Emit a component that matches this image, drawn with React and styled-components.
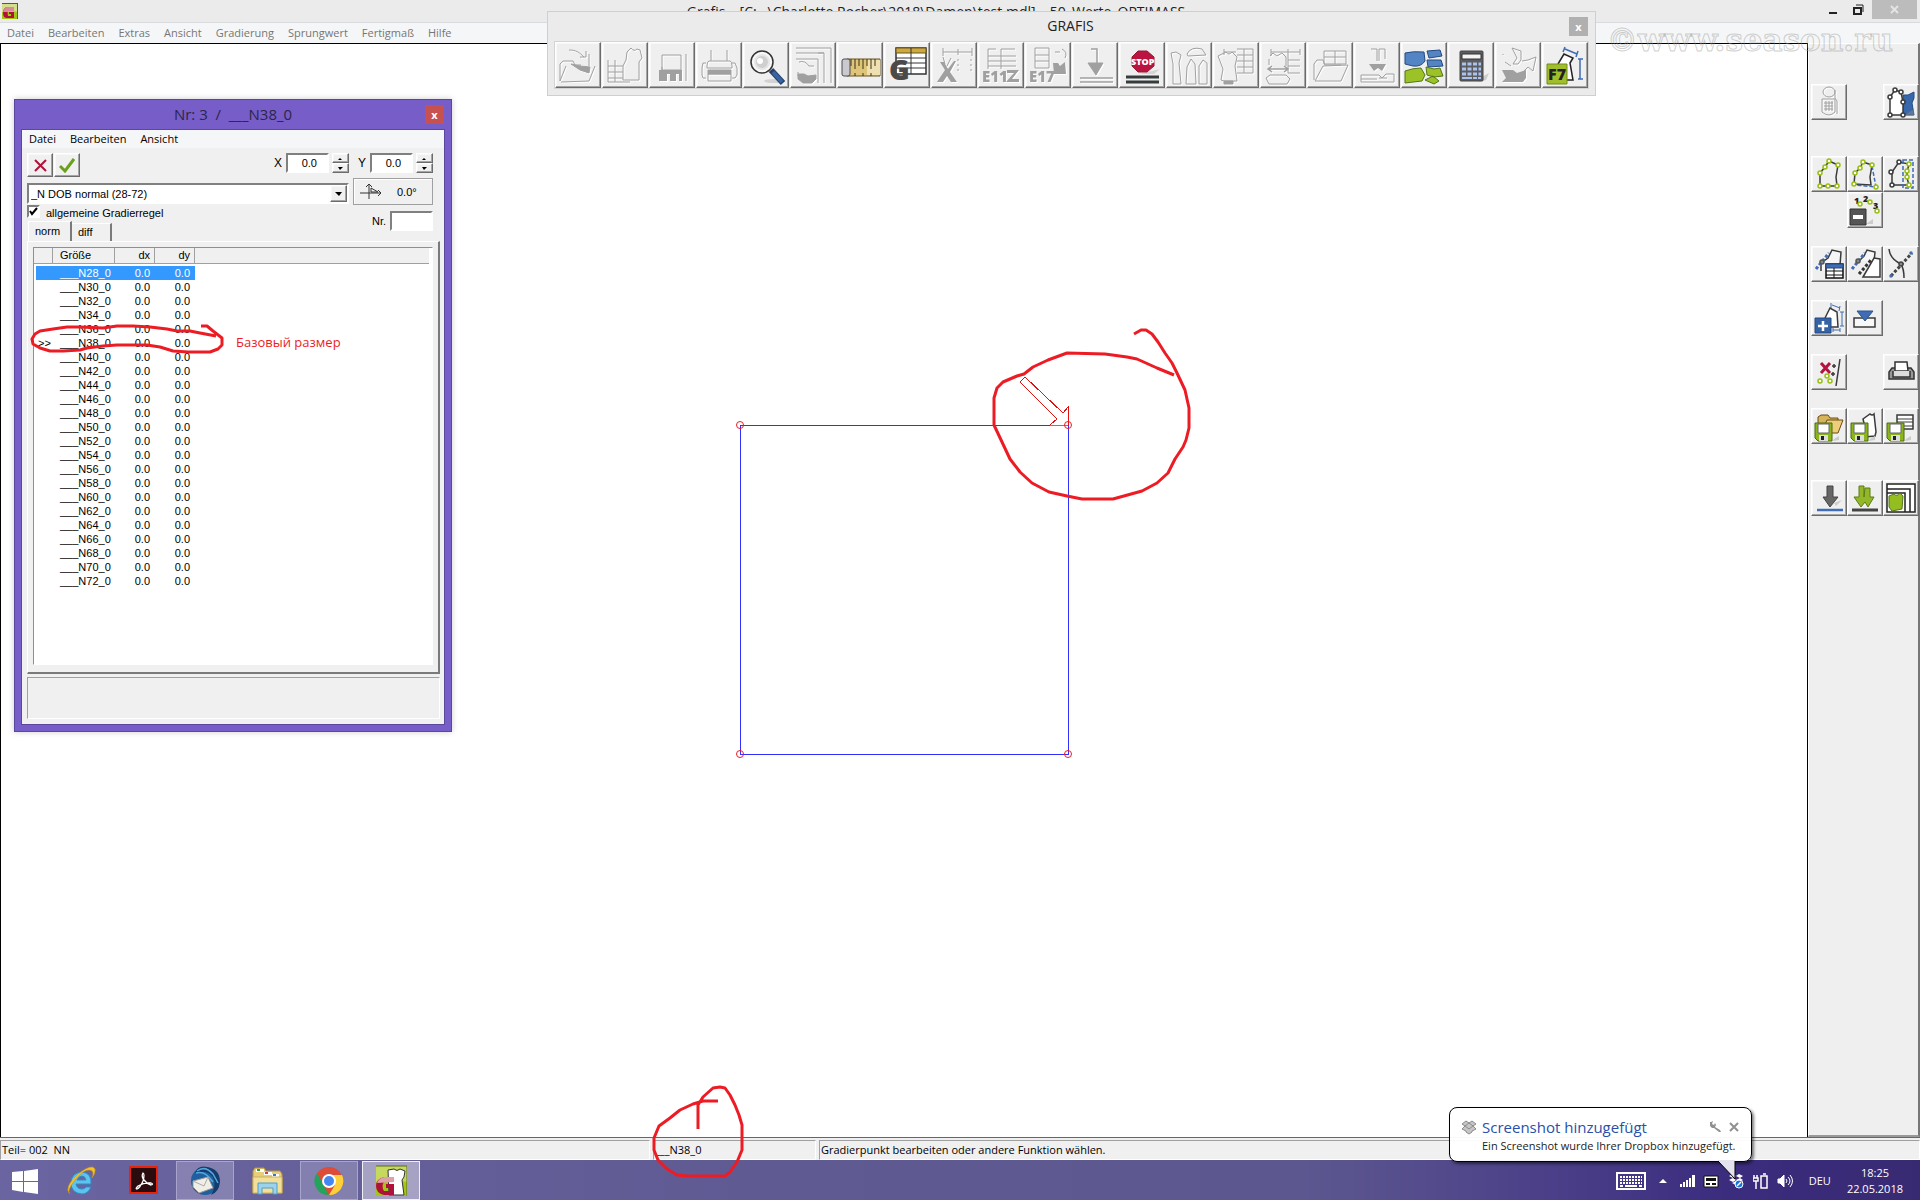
import React, { useState } from "react";
import styled, { createGlobalStyle } from "styled-components";

const GlobalStyle = createGlobalStyle`
* {
    box-sizing: border-box;
}

body {
    margin: 0;
    overflow: hidden;
    font-family: 'Open Sans', 'Noto Sans', sans-serif;
    font-size: 11px;
    color: #000;
}

button, input, select {
    font: inherit;
    color: inherit;
    margin: 0;
    padding: 0;
    border-radius: 0;
}
`;

/* ---------- desktop and main window ---------- */

const Desktop = styled.div`
position: relative;
display: flex;
flex-direction: column;
height: 100vh;
background-color: #f0f0f0;
overflow: hidden;
`;

const TitleBar = styled.header`
display: flex;
align-items: flex-start;
height: 23px;
padding-left: 2px;
background-color: #ebebeb;
border-bottom: 1px solid #d8dade;
`;

const AppIcon = styled.svg`
width: 16px;
height: 16px;
margin-top: 3px;
`;

const WindowTitle = styled.h1`
flex: 1;
margin: 0;
padding-left: 34px;
font-size: 14px;
line-height: 24px;
font-weight: 400;
text-align: center;
color: #222;
white-space: pre;
`;

const WindowControls = styled.div`
display: flex;
margin-right: 3px;
`;

const WindowButton = styled.button`
width: ${props => (props.$wide ? 45 : 26)}px;
height: 19px;
border: 0;
background-color: ${props => (props.$wide ? "#bcbcbc" : "transparent")};

svg {
    display: block;
    margin: 0 auto;
}
`;

const MenuBar = styled.nav`
display: flex;
gap: 14px;
height: ${props => props.$height}px;
padding-left: 7px;
background-color: #f5f6f7;
color: ${props => props.$color};
line-height: ${props => props.$height}px;
`;

const MenuLink = styled.a`
color: inherit;
text-decoration: none;
`;

const Workspace = styled.main`
flex: 1;
display: flex;
min-height: 0;
border-bottom: 1px solid #666;
`;

const Canvas = styled.section`
position: relative;
flex: 1;
background-color: #fff;
border: 1px solid #000;
border-bottom: 0;
`;

const Drawing = styled.svg`
position: absolute;
left: 0;
top: 0;
width: 100%;
height: 100%;
`;

const SideBar = styled.aside`
width: 112px;
padding: 40px 1px 0 2px;
background-color: #efefef;
border: 1px solid #fff;
border-right: 2px solid #777;
border-bottom: 2px solid #999;
`;

const SideRow = styled.div`
display: grid;
grid-template-columns: repeat(3, 36px);
height: 36px;
margin-bottom: ${props => props.$gap}px;
`;

const bevel = `
border: 1px solid;
border-color: #fff #6b6b6b #6b6b6b #fff;
box-shadow: inset -1px -1px 0 #a5a5a5, inset 1px 1px 0 #f8f8f8;
`;

const ToolButton = styled.button`
${bevel}
width: ${props => props.$size}px;
height: ${props => props.$size}px;
background-color: #efefef;

svg {
    display: block;
    margin: -1px;
    ${props => props.$dim && "filter: drop-shadow(1px 1px 0 #fff);"}
}
`;

/* ---------- floating palette ---------- */

const Palette = styled.section`
position: absolute;
left: 547px;
top: 11px;
padding: 0 6px 6px;
background-color: #ebebeb;
border: 1px solid #cfcfcf;
`;

const PaletteHead = styled.div`
display: flex;
align-items: center;
height: 29px;

h2 {
    flex: 1;
    margin: 0;
    padding: 0 0 2px 18px;
    font-size: 14px;
    line-height: 24px;
    font-weight: 400;
    text-align: center;
    color: #222;
}
`;

const CloseButton = styled.button`
width: 19px;
height: 19px;
margin-right: 1px;
border: 0;
background-color: ${props => props.$color};
color: #fff;
font-size: 11px;
font-weight: 700;
line-height: 16px;
`;

const PaletteTools = styled.div`
display: flex;
gap: 1px;
border: 1px solid #d4d4d4;
`;

/* ---------- grading dialog ---------- */

const Dialog = styled.section`
position: absolute;
left: 14px;
top: 99px;
width: 438px;
padding: 0 6px 6px;
background-color: #765dc8;
border: 1px solid #5a489f;
box-shadow: 0 0 6px rgba(0, 0, 0, .2);
`;

const DialogHead = styled.div`
display: flex;
align-items: center;
height: 29px;

h2 {
    flex: 1;
    margin: 0;
    padding: 0 0 2px 20px;
    font-size: 15px;
    font-weight: 400;
    text-align: center;
    color: #2d2548;
    white-space: pre;
}
`;

const DialogBody = styled.div`
border: 1px solid #5a489f;
background-color: #f0f0f0;
font-family: 'Liberation Sans', sans-serif;

nav {
    font-family: 'Open Sans', sans-serif;
}
`;

const DialogContent = styled.div`
display: flex;
flex-direction: column;
padding: 5px 4px 5px 5px;
`;

const FormRow = styled.div`
display: flex;
align-items: flex-start;
height: ${props => props.$height}px;
padding-right: 7px;
`;

const NumberGroup = styled.div`
display: flex;
padding-top: 6px;
`;

const SquareButton = styled.button`
${bevel}
width: 26px;
height: 24px;
margin-right: 1px;
background-color: #f0f0f0;

svg {
    display: block;
    margin: 0 auto;
}
`;

const Spacer = styled.span`
flex: 1;
`;

const FieldLabel = styled.label`
margin-right: 4px;
font-size: ${props => (props.$big ? 12 : 11)}px;
line-height: ${props => (props.$low ? 16 : 20)}px;
`;

const sunken = `
border: 2px solid;
border-color: #808080 #fff #fff #808080;
background-color: #fff;
`;

const NumberField = styled.input`
${sunken}
width: 43px;
height: 20px;
padding-right: ${props => (props.$tight ? 2 : 10)}px;
text-align: right;
`;

const Spinner = styled.span`
display: flex;
flex-direction: column;
margin: 0 0 0 3px;
padding-right: ${props => props.$after}px;

button {
    ${bevel}
    display: block;
    width: 17px;
    height: 10px;
    background-color: #f0f0f0;
}

svg {
    display: block;
    margin: 0 auto;
}
`;

const SelectBox = styled.div`
display: grid;
flex: 1;
margin-top: 5px;
margin-right: 4px;

select {
    ${sunken}
    grid-area: 1 / 1;
    height: 21px;
    padding-left: 2px;
    appearance: none;
}

span {
    ${bevel}
    grid-area: 1 / 1;
    justify-self: end;
    width: 17px;
    height: 17px;
    margin: 2px;
    background-color: #f0f0f0;
    pointer-events: none;
}
`;

const AngleButton = styled.button`
display: flex;
align-items: center;
gap: 14px;
width: 80px;
height: 27px;
padding-left: 6px;
border: 1px solid #a0a0a0;
background-color: #f0f0f0;
box-shadow: inset 1px 1px 0 #fff;
`;

const CheckBox = styled.input`
${sunken}
appearance: none;
width: 13px;
height: 13px;
margin: 0 6px 0 0;

&:checked {
    background: #fff url("data:image/svg+xml,%3Csvg xmlns='http://www.w3.org/2000/svg' viewBox='0 0 9 9'%3E%3Cpath d='M1 4l2 3 5-6' fill='none' stroke='%23000' stroke-width='2'/%3E%3C/svg%3E");
}
`;

const TabRow = styled.div`
display: flex;
align-items: flex-end;
height: 20px;
padding-left: 1px;
`;

const Tab = styled.button`
width: ${props => (props.$active ? 44 : 40)}px;
height: ${props => (props.$active ? 20 : 18)}px;
padding: 0 0 2px 6px;
border: 0;
border-top: 1px solid #fff;
border-left: ${props => (props.$active ? "1px solid #fff" : 0)};
border-right: 2px solid #7a7a7a;
background-color: #f0f0f0;
text-align: left;
line-height: 16px;
`;

const TabPanel = styled.div`
height: 433px;
padding: 5px 5px 7px;
border: 1px solid #fff;
border-right: 2px solid #7a7a7a;
border-bottom: 2px solid #7a7a7a;
`;

const ListBox = styled.div`
height: 100%;
border: 1px solid #8f8f8f;
border-right-color: #fff;
border-bottom-color: #fff;
background-color: #fff;
`;

const SizeTable = styled.table`
width: calc(100% - 3px);
table-layout: fixed;
border-collapse: separate;
border-spacing: 0;

th {
    height: 16px;
    padding: 0 4px 0 7px;
    border-right: 1px solid #a0a0a0;
    border-bottom: 1px solid #a0a0a0;
    background-color: #f0f0f0;
    font-weight: 400;
    line-height: 15px;
    text-align: right;
}

th:nth-child(2) {
    text-align: left;
}

th:last-child {
    border-right: 0;
}

tbody::before {
    content: "";
    display: block;
    height: 2px;
}

td {
    height: 14px;
    padding: 0 5px 0 7px;
    line-height: 14px;
    text-align: right;
}

td:first-child {
    padding: 0 0 0 2px;
    border-left: 2px solid transparent;
    background-clip: padding-box;
    text-align: left;
}

td:nth-child(2) {
    text-align: left;
}
`;

const SizeRow = styled.tr`
td:not(:last-child) {
    background-color: ${props => (props.$selected ? "#3399ff" : "transparent")};
    color: ${props => (props.$selected ? "#fff" : "#000")};
}
`;

const MessagePanel = styled.div`
height: 42px;
margin-top: 3px;
border: 1px solid #a0a0a0;
border-right-color: #fff;
border-bottom-color: #fff;
`;

/* ---------- status bar and task bar ---------- */

const StatusBar = styled.footer`
display: flex;
gap: 3px;
height: 22px;
padding-top: 2px;
background-color: #f0f0f0;
`;

const StatusCell = styled.div`
flex: ${props => (props.$width ? `0 0 ${props.$width}px` : 1)};
padding-left: 1px;
border: 1px solid #a0a0a0;
border-right-color: #fff;
border-bottom-color: #fff;
line-height: 18px;
white-space: pre;
`;

const TaskBar = styled.footer`
display: flex;
height: 40px;
padding-top: 1px;
background: linear-gradient(90deg, #6a64a0 0, #5f5a92 40%, #5c578f 68%, #4c4189 80%, #3b2c7e 90%, #382a72 100%);
color: #fff;
`;

const TaskButton = styled.button`
width: ${props => (props.$start ? 48 : 58)}px;
height: 39px;
margin-right: 4px;
border: 1px solid ${props => (props.$front ? "#f0eff6" : props.$open ? "#a8a4cc" : "transparent")};
background-color: ${props => (props.$front ? "rgba(255,255,255,.42)" : props.$open ? "rgba(255,255,255,.2)" : "transparent")};

svg {
    display: block;
    margin: 0 auto;
}
`;

const Tray = styled.div`
display: flex;
align-items: center;
margin-left: auto;
padding-right: 17px;
`;

const TrayIcon = styled.svg`
display: block;
margin-right: ${props => props.$after}px;
`;

const Clock = styled.time`
margin-left: 16px;
line-height: 16px;
text-align: center;
white-space: pre-line;
`;

const Balloon = styled.section`
position: absolute;
right: 168px;
bottom: 38px;
width: 303px;
height: 55px;
padding: 8px 10px 0 11px;
border: 1px solid #000;
border-radius: 8px;
background-color: rgba(255, 255, 255, .96);
box-shadow: 2px 2px 3px rgba(0, 0, 0, .5);

p {
    margin: 0;
    padding-left: 21px;
    line-height: 16px;
    color: #222;
    white-space: nowrap;
}
`;

const BalloonHead = styled.div`
display: flex;
align-items: center;
gap: 5px;
height: 22px;

h2 {
    flex: 1;
    margin: 0;
    font-size: 15px;
    font-weight: 400;
    line-height: 22px;
    color: #2850aa;
    white-space: nowrap;
}

button {
    width: 14px;
    height: 22px;
    border: 0;
    background: none;
}
`;

const BalloonTail = styled.svg`
position: absolute;
right: 14px;
top: 52px;
`;

const Watermark = styled.div`
position: absolute;
right: 27px;
top: 22px;
font-family: 'DejaVu Serif', serif;
font-size: 31px;
font-weight: 700;
line-height: 36px;
color: transparent;
-webkit-text-stroke: 1px rgba(150, 150, 150, .45);
pointer-events: none;
`;

const Markup = styled.svg`
position: absolute;
left: 0;
top: 0;
width: 100%;
height: 100%;
pointer-events: none;
`;

const Note = styled.div`
position: absolute;
left: 236px;
top: 333px;
font-size: 13px;
line-height: 18px;
color: #ed1c24;
`;

/* ---------- drawings ---------- */

const GREY = "#a0a0a0";
const GREEN = "#97bf0d";
const BLUE = "#3f6cb5";
const DARK = "#3a3a3a";

const Dot = ({ x, y, c = GREEN, fill = "#fff", r = 2 }) => (
    <circle cx={x} cy={y} r={r} fill={fill} stroke={c} strokeWidth="1.5" />
);

const Label = ({ x, y, size, fill, children }) => (
    <text x={x} y={y} fontSize={size} fontWeight="800" fill={fill} stroke="none">{children}</text>
);

const Floppy = () => (
    <g stroke="none">
        <path d="M4 15h17v18H7l-3-3z" fill="#8ab51c" stroke="#4c6b12" />
        <path d="M7 16h11v9H7z" fill="#fff" stroke="#666" />
        <path d="M8 27h9v6H8z" fill="#ddd" />
        <path d="M10 28h3v4h-3z" fill="#222" />
        <path d="M23 31l5-3v4l-6 1z" fill="#ccc" />
    </g>
);

const paletteTools = [
    { name: "Öffnen", dim: true, icon: <>
        <path d="M5 39V22l3-3h10l2 4h6M5 39L11 24M6 40l28-1 6-15M14 8c7 0 10 2 15 7M25 15h6v-6M34 12v12" />
        <path d="M16 22l9 2 10 1-1 6-9-3z" fill={GREY} />
    </> },
    { name: "Modell", dim: true, icon: <>
        <path d="M6 18v22h22M6 24h15M6 30h15M6 36h15M13 18v22M21 24v14h16V20l3-4-2-8-3-1q-3 3-6-1l-4 4-1 8-3 6" />
    </> },
    { name: "Speichern", dim: true, icon: <>
        <path d="M13 13h19v15H13zM37 12v27M13 28v-3" />
        <path d="M10 28h23v11h-3v-7h-3v7h-6v-7h-3v7h-8z" fill={GREY} stroke="none" />
    </> },
    { name: "Drucken", dim: true, icon: <>
        <path d="M15 8v11M31 8v11M13 19h21q2 0 2 5v2H11v-2q0-5 2-5zM10 21H7l-1 5v7l1 3h3M36 21h3l2 5v7l-2 3h-3M12 32h23v7H12z" />
        <path d="M12 28h23v4H12z" fill={GREY} />
    </> },
    { name: "Lupe", icon: <>
        <ellipse cx="31" cy="39" rx="10" ry="2" fill="#d2d2d2" stroke="none" />
        <path d="M28 28l12 13" stroke="#2d3f66" strokeWidth="6" />
        <path d="M30 30l9 10" stroke="#3465a4" strokeWidth="4" />
        <circle cx="19" cy="20" r="11" fill="#f8f8f8" stroke="#333" strokeWidth="1.5" />
        <circle cx="19" cy="20" r="7" fill="#cfcfcf" stroke="#e6e6e6" strokeWidth="2" />
        <circle cx="17" cy="19" r="3" fill="#fff" stroke="none" />
    </> },
    { name: "Rahmen", dim: true, icon: <>
        <path d="M6 6h35v35M34 41V11M6 11h28M6 17h22v24M28 11h6M9 20q6-2 10 4h5M8 30v4" />
        <path d="M8 32h6l4 2 8-1v4l-4 4h-9l-5-4z" fill={GREY} />
    </> },
    { name: "Massband", icon: <>
        <path d="M10 17h33v17H10z" fill="#dfc57a" stroke="#6b5620" />
        <path d="M30 18h13v15H30z" fill="#efe0b2" stroke="none" />
        <path d="M14 17v7M18 17v10M22 17v7M26 17v10M30 17v7M34 17v10M38 17v7M18 31v3M26 31v3M34 31v3" stroke="#3d3210" />
        <rect x="5" y="17" width="8" height="17" rx="2" fill="#c9c9cf" stroke="#4c4c4c" />
    </> },
    { name: "Masstabelle", icon: <>
        <path d="M12 6h30v26H12z" fill="#fff" stroke="#333" strokeWidth="1.5" />
        <path d="M12 6h30v5H12z" fill="#cfa93c" stroke="#6b5620" />
        <path d="M12 16h30M12 21h30M12 26h30M27 6v26" stroke="#333" />
        <Label x="5" y="38" size="28" fill="#4a4a4a">G</Label>
    </> },
    { name: "Schneiden", dim: true, icon: <>
        <path d="M12 6v8M12 10h29M41 6v8M27 7v6M27 17v2M27 22v2M27 27v2M40 17v2M40 22v2M40 27v2M20 16l-4 8M12 15l2 7" />
        <path d="M9 20h4l4 7 6-8h2l-6 11 7 10h-6l-4-6-4 6H6l8-12z" fill={GREY} stroke="none" />
    </> },
    { name: "E11", dim: true, icon: <>
        <path d="M10 7h8M23 7h14M10 14h28M10 19h28M10 24h28M10 7v20M23 7v20" />
        <Label x="4" y="40" size="15" fill={GREY}>E11</Label>
        <path d="M29 28h12l-7 9h7v3H28l8-9h-7z" fill={GREY} stroke="none" />
    </> },
    { name: "E17", dim: true, icon: <>
        <path d="M10 6h14v20H10zM10 13h14M10 19h14M30 10h5M37 7q6 3 3 9" />
        <path d="M28 21h5l2 3 5-4 1 12H29z" fill={GREY} stroke="none" />
        <Label x="4" y="40" size="15" fill={GREY}>E17</Label>
    </> },
    { name: "Ablegen", dim: true, icon: <>
        <path d="M19 7h6v14M8 36h33M8 40h33" strokeWidth="1.5" />
        <path d="M16 21h15l-7 12z" fill={GREY} />
    </> },
    { name: "Stop", icon: <>
        <path d="M33 29l8-2-6 5H20z" fill="#d4d4d4" stroke="none" />
        <path d="M19 9h9l7 6v9l-7 6h-9l-6-6v-9z" fill="#bb1440" stroke="#8f1a38" />
        <Label x="12" y="23" size="9" fill="#fff">STOP</Label>
        <path d="M7 35h33M7 40h33" stroke="#363c3c" strokeWidth="3" />
    </> },
    { name: "Teile", dim: true, icon: <>
        <path d="M5 11l5-1 5 3-2 8 2 21H7V22zM21 12q4-8 15-5l4 6-18 1zM20 42l1-17 4-8 4 5 1 20zM33 42V24l4-6 4 3v21z" />
    </> },
    { name: "Teil in Tabelle", dim: true, icon: <>
        <path d="M24 7h16v24H24M24 13h16M24 19h16M24 25h16M31 7v24M11 7v6M11 10h12M5 14l8-4q3 4 6 0l5 5-2 9 2 15H11l-3-1 2-11z" />
        <path d="M11 39h9v3h-9z" fill={GREY} />
    </> },
    { name: "Breite", dim: true, icon: <>
        <path d="M11 7v7M11 10h29M28 7v24h12M28 18h12M28 24h12M40 7v6M10 14l3-3 4 3 5-3 4 4v9M6 36l4-3h16l4 4-3 5H9zM9 17v6" />
        <path d="M8 27h20M12 24l-4 3 4 3M24 24l4 3-4 3" strokeWidth="1.5" />
    </> },
    { name: "Ablage", dim: true, icon: <>
        <path d="M17 9h22v13H17zM17 15h22M28 9v13M7 38V22l3-4h6l2 5h16M8 39l8-15 25-1-7 16z" />
    </> },
    { name: "Ablegen in Lage", dim: true, icon: <>
        <path d="M17 7h6v12M25 19V7h6v10M7 33h18l3 3 4-4h8v8H7zM7 37h16M25 36h8" />
        <path d="M15 22h17l-4 7-4-3-4 3z" fill={GREY} stroke="none" />
    </> },
    { name: "Schnittbild", icon: <>
        <path d="M4 11q8-2 19-1l1 9q-4 6-12 5l-8-2zM26 9l13-1 2 6-13 2zM26 18h14l2 6-15 1z" fill="#5384c4" stroke="#254a80" />
        <path d="M4 29q8-3 16-3l4 7-3 6-17 2zM25 25l8 2 6-1 3 8-9 1-7-2zM24 38l8-4 6 5-5 3z" fill="#9bc327" stroke="#55751a" />
    </> },
    { name: "Rechner", icon: <>
        <path d="M34 35l7-4-3 7-8 2z" fill="#ccc" stroke="none" />
        <rect x="12" y="9" width="23" height="30" rx="1" fill="#5d5d5f" stroke="#444" />
        <path d="M14 12h19v5H14z" fill="#f4f4f4" stroke="#333" />
        <path d="M14 22h19M14 27h19M14 32h19" stroke="#a9c2f0" strokeWidth="3" strokeDasharray="4 1.5" />
        <path d="M14 36h19" stroke="#a9c2f0" strokeWidth="2" strokeDasharray="10 1 4 1" />
    </> },
    { name: "Ausgabe", dim: true, icon: <>
        <path d="M17 6l9 3v9l-3 4h-5l4-6zM27 19l6-1 8-3-3 14-5-4-6 6M8 12v1M10 20l6 4" />
        <path d="M7 28h11l4 3 9-3v8l-3 4H7l4-4z" fill={GREY} stroke="none" />
    </> },
    { name: "F7", icon: <>
        <path d="M23 7l12 5M23 5l-2 5M36 9l-2 6M38 17v20M36 17h5M36 37h5" stroke={BLUE} strokeWidth="1.5" />
        <path d="M16 22l6-10 9 4-3 5 3 17h-6" fill="#fff" stroke="#222" strokeWidth="1.5" />
        <path d="M5 22h20v20H5z" fill="#a0be2c" stroke="#748d15" />
        <Label x="6" y="38" size="16" fill="#222">F7</Label>
    </> },
];

const sideRows = [
    { gap: 36, tools: [
        { name: "Telefon", dim: true, icon: <>
            <ellipse cx="18" cy="8" rx="6" ry="5" />
            <path d="M11 15h13v13q-6 6-13 0zM13 19h9M13 22h9M13 25h9M15 17v10M18 17v10M21 17v10M24 6v8l2 3v13" />
        </> },
        null,
        { name: "Teil anzeigen", icon: <>
            <path d="M20 11l5 0 6-3v6l-2 5 2 12H20z" fill="#3768ab" stroke="#244a80" />
            <path d="M31 25v7H20z" fill="#888" stroke="none" opacity=".5" />
            <path d="M7 31V13l5-7 6 2 2 10v13z" fill="#fff" stroke={DARK} strokeWidth="1.5" />
            <Dot x="7" y="13" c={DARK} /><Dot x="12" y="6" c={DARK} /><Dot x="18" y="8" c={DARK} />
            <Dot x="20" y="18" c={DARK} /><Dot x="7" y="31" c={DARK} /><Dot x="20" y="31" c={DARK} />
        </> },
    ] },
    { gap: 0, tools: [
        { name: "Alle Punkte", icon: <>
            <path d="M9 30V17l5-6 4-6 9 4-2 12 1 9z" stroke={DARK} strokeWidth="1.5" />
            <Dot x="9" y="17" /><Dot x="14" y="11" /><Dot x="18" y="5" /><Dot x="27" y="9" />
            <Dot x="9" y="30" /><Dot x="17" y="30" /><Dot x="26" y="30" />
        </> },
        { name: "Punkt verschieben", icon: <>
            <path d="M7 28l1-11 5-5 3-6 9 3-2 12 1 8z" stroke={DARK} strokeWidth="1.5" />
            <path d="M25 10l4 21-21-2" stroke={BLUE} strokeDasharray="4 2" strokeWidth="1.5" />
            <Dot x="8" y="17" /><Dot x="13" y="12" /><Dot x="16" y="6" /><Dot x="25" y="9" />
            <Dot x="7" y="28" /><Dot x="29" y="31" />
        </> },
        { name: "Punkte wählen", icon: <>
            <path d="M26 29H9V16l7-10 10 2-2 8v6z" stroke={DARK} strokeWidth="1.5" />
            <path d="M20 4h10v28H20z" stroke={BLUE} strokeDasharray="4 2" strokeWidth="1.5" />
            <Dot x="8" y="16" c={DARK} /><Dot x="16" y="6" c={DARK} /><Dot x="9" y="29" c={DARK} />
            <Dot x="26" y="8" /><Dot x="24" y="15" /><Dot x="24" y="21" /><Dot x="26" y="29" />
        </> },
    ] },
    { gap: 18, tools: [
        null,
        { name: "Nummerieren", icon: <>
            <path d="M19 32l7-5v5z" fill="#ccc" stroke="none" />
            <Label x="7" y="12" size="9" fill="#222">1</Label>
            <Label x="16" y="10" size="9" fill="#222">2</Label>
            <Label x="26" y="17" size="9" fill="#222">3</Label>
            <Dot x="13" y="12" /><Dot x="23" y="10" /><Dot x="30" y="19" />
            <path d="M3 17h16v16H3z" fill="#555" stroke="#333" />
            <path d="M6 23h10v4H6z" fill="#fff" stroke="none" />
        </> },
        null,
    ] },
    { gap: 18, tools: [
        { name: "Sprungwerttabelle", icon: <>
            <path d="M10 25v-8l7-5 4-8 9 2-1 13" fill="#f6f6f6" stroke={DARK} strokeWidth="1.5" />
            <path d="M5 23L18 7" stroke={BLUE} strokeWidth="3" strokeDasharray="3 2" />
            <Dot x="11" y="16" c="#555" fill="#888" />
            <path d="M15 18h17v14H15z" fill="#fff" stroke="#111" strokeWidth="1.5" />
            <path d="M15 18h17v4H15z" fill={BLUE} stroke="#254a80" />
            <path d="M15 25h17M15 29h17M23 22v10" stroke="#111" />
        </> },
        { name: "Sprungwert kopieren", icon: <>
            <path d="M13 14l4-4 3-6 8 2-1 10" fill="#f6f6f6" stroke={DARK} strokeWidth="1.5" />
            <path d="M16 31l11-19 6 1v18z" fill="#fff" stroke={DARK} strokeWidth="1.5" />
            <path d="M5 23L18 7" stroke={BLUE} strokeWidth="3" strokeDasharray="3 2" />
            <path d="M12 28l12-14" stroke="#333" strokeWidth="3" strokeDasharray="3 2" />
            <Dot x="11" y="15" c="#555" fill="#888" />
        </> },
        { name: "Richtung", icon: <>
            <path d="M6 3q1 10 12 15 3 5 3 14" stroke={DARK} strokeWidth="1.5" />
            <path d="M8 30L29 7" stroke="#444" strokeWidth="3" strokeDasharray="3 2" />
            <Dot x="18" y="18" c="#444" fill="#888" /><Dot x="8" y="30" c={BLUE} fill={BLUE} r="1" />
            <Dot x="28" y="7" c={BLUE} fill={BLUE} r="1" />
        </> },
    ] },
    { gap: 18, tools: [
        { name: "Hinzufügen", icon: <>
            <path d="M21 5l8 3M20 3v5M29 6l-1 5M31 12v14M29 12h4M29 26h4M22 30h7M22 28v4M29 28v4" stroke={BLUE} />
            <path d="M14 18l5-10 7 4 1 15h-8" fill="#fff" stroke={DARK} strokeWidth="1.5" />
            <path d="M4 18h16v15H4z" fill="#3563a5" stroke="#254a80" />
            <path d="M12 21v10M7 26h10" stroke="#fff" strokeWidth="2.5" />
        </> },
        { name: "Einfügen", icon: <>
            <path d="M7 18h21v9H7z" fill="#f8f8f8" stroke={DARK} strokeWidth="1.5" />
            <path d="M10 11h16l-8 10z" fill={BLUE} stroke="#2c5590" />
        </> },
        null,
    ] },
    { gap: 18, tools: [
        { name: "Löschen", icon: <>
            <path d="M10 9l9 10M19 9l-9 10" stroke="#b3123e" strokeWidth="3" />
            <path d="M29 5l-4 27" stroke={DARK} strokeWidth="1.5" />
            <path d="M21 12h4M23 10v4M20 20h4M22 18v4" stroke={DARK} strokeWidth="1.5" />
            <Dot x="16" y="22" /><Dot x="9" y="27" /><Dot x="19" y="27" />
        </> },
        null,
        { name: "Drucken", icon: <>
            <path d="M9 14h19l3 4v7H6v-7z" fill="#999" stroke="#333" strokeWidth="1.5" />
            <path d="M12 8h12l1 9H12z" fill="#fff" stroke="#333" strokeWidth="1.5" />
            <path d="M10 17v6h17v-6" fill="#ddd" stroke="#333" strokeWidth="1.5" />
        </> },
    ] },
    { gap: 36, tools: [
        { name: "Ordner speichern", icon: <>
            <path d="M7 21V9l3-2h7l2 3h8v3" fill="#d5b45a" stroke="#6b4b17" />
            <path d="M12 21l4-9h16l-5 13H12z" fill="#efce7a" stroke="#6b4b17" />
            <Floppy />
        </> },
        { name: "Teil speichern", icon: <>
            <path d="M17 29V15l-1-4 7-5q2 2 4 0l1 9 1 9-1 4z" fill="#fff" stroke={DARK} strokeWidth="1.5" />
            <Floppy />
        </> },
        { name: "Tabelle speichern", icon: <>
            <path d="M14 7h16v14H14z" fill="#fff" stroke={DARK} strokeWidth="1.5" />
            <path d="M14 11h16M14 14h16M14 18h16" stroke={DARK} />
            <Floppy />
        </> },
    ] },
    { gap: 0, tools: [
        { name: "Ablegen", icon: <>
            <path d="M23 23l8-3-6 6z" fill="#ccc" stroke="none" />
            <path d="M16 6h6v11h5l-8 10-7-10h4z" fill="#666" stroke="#444" />
            <path d="M6 30h26" stroke={BLUE} strokeWidth="2.5" />
        </> },
        { name: "Alle ablegen", icon: <>
            <path d="M12 6h5v11l1-9h5v9h4l-6 10-3-5-4 5-7-10h5z" fill="#93b827" stroke="#5c7a15" />
            <path d="M5 30h26" stroke="#444" strokeWidth="3" />
        </> },
        { name: "Teileliste", icon: <>
            <path d="M4 4h28v28H4z" fill="#fff" stroke="#222" strokeWidth="1.5" />
            <path d="M4 9h23v23M4 13h18v19" stroke="#222" strokeWidth="1.5" />
            <path d="M6 16l5-2q3 3 6-1l3 3-1 13-10 2-3-4z" fill="#94bd20" stroke="#55751a" />
        </> },
    ] },
];

const Tool = ({ tool, size }) => (
    <ToolButton type="button" $size={size} $dim={tool.dim} title={tool.name} aria-label={tool.name}>
        <svg width={size} height={size} fill="none" stroke={GREY} strokeWidth="1">{tool.icon}</svg>
    </ToolButton>
);

const GrafisMark = () => (
    <>
        <path d="M0 0h16v16H0z" fill="#a2c517" />
        <path d="M0 0h16v9q-8-2-16 0z" fill="#d4df8d" />
        <path d="M0 0h15v1H0zM15 0h1v16h-1z" fill="#565e35" />
        <path d="M12 4H5Q1 5 1 10t4 5h7V9H7v2h2v2H6q-1-3 0-5h6z" fill="#b0103a" />
        <path d="M12 4H5Q2 5 1 9h11z" fill="#e5a7b2" opacity=".8" />
    </>
);

const sizes = [];
for (let n = 28; n <= 72; n += 2) {
    sizes.push({ name: `___N${n}_0`, base: n === 38 });
}

const Steps = ({ name, after }) => (
    <Spinner $after={after}>
        <button type="button" aria-label={`${name} erhöhen`}>
            <svg width="5" height="3"><path d="M0 3l2-2 2 2z" /></svg>
        </button>
        <button type="button" aria-label={`${name} verringern`}>
            <svg width="5" height="3"><path d="M0 0h5L2 3z" /></svg>
        </button>
    </Spinner>
);

const GradingDialog = () => {
    const [selected, setSelected] = useState(0);
    const [tab, setTab] = useState("norm");
    return (
        <Dialog>
            <DialogHead>
                <h2>{"Nr: 3  /  ___N38_0"}</h2>
                <CloseButton $color="#c75050" type="button" aria-label="Schließen">x</CloseButton>
            </DialogHead>
            <DialogBody>
                <MenuBar $height={18} $color="#000">
                    {["Datei", "Bearbeiten", "Ansicht"].map(item => <MenuLink href="#" key={item}>{item}</MenuLink>)}
                </MenuBar>
                <DialogContent>
                    <FormRow $height={25}>
                        <SquareButton type="button" aria-label="Abbrechen">
                            <svg width="16" height="16" fill="none" stroke="#b0123a" strokeWidth="2"><path d="M3 3l11 11M14 3L3 14" /></svg>
                        </SquareButton>
                        <SquareButton type="button" aria-label="Übernehmen">
                            <svg width="16" height="16" fill="none" stroke="#6ba01c" strokeWidth="3"><path d="M1 9l5 5L15 2" /></svg>
                        </SquareButton>
                        <Spacer />
                        <FieldLabel htmlFor="x" $big>X</FieldLabel>
                        <NumberField id="x" defaultValue="0.0" />
                        <Steps name="X" after={9} />
                        <FieldLabel htmlFor="y" $big>Y</FieldLabel>
                        <NumberField id="y" defaultValue="0.0" />
                        <Steps name="Y" after={0} />
                    </FormRow>
                    <FormRow $height={27}>
                        <SelectBox>
                            <select aria-label="Sprungwertregel">
                                <option>_N DOB normal (28-72)</option>
                            </select>
                            <span><svg width="15" height="15"><path d="M4 6h7l-3 4z" /></svg></span>
                        </SelectBox>
                        <AngleButton type="button">
                            <svg width="23" height="18" fill="none" stroke="#333"><path d="M0 10h21M18 7l3 3-3 3M9 1v15M6 4l3-3 3 3M11 5l7 4h-7z" /></svg>
                            0.0°
                        </AngleButton>
                    </FormRow>
                    <FormRow $height={16}>
                        <CheckBox type="checkbox" id="rule" defaultChecked />
                        <FieldLabel htmlFor="rule" $low>allgemeine Gradierregel</FieldLabel>
                        <Spacer />
                        <NumberGroup>
                            <FieldLabel htmlFor="nr">Nr.</FieldLabel>
                            <NumberField id="nr" $tight />
                        </NumberGroup>
                    </FormRow>
                    <TabRow>
                        {["norm", "diff"].map(name => (
                            <Tab key={name} type="button" $active={tab === name} onClick={() => setTab(name)}>{name}</Tab>
                        ))}
                    </TabRow>
                    <TabPanel>
                        <ListBox>
                            <SizeTable>
                                <colgroup>
                                    <col width="19" />
                                    <col width="62" />
                                    <col width="40" />
                                    <col width="40" />
                                    <col />
                                </colgroup>
                                <thead>
                                    <tr><th></th><th>Größe</th><th>dx</th><th>dy</th><th></th></tr>
                                </thead>
                                <tbody>
                                    {sizes.map((size, i) => (
                                        <SizeRow key={size.name} $selected={i === selected} onClick={() => setSelected(i)}>
                                            <td>{size.base ? ">>" : ""}</td>
                                            <td>{size.name}</td>
                                            <td>0.0</td>
                                            <td>0.0</td>
                                            <td></td>
                                        </SizeRow>
                                    ))}
                                </tbody>
                            </SizeTable>
                        </ListBox>
                    </TabPanel>
                    <MessagePanel />
                </DialogContent>
            </DialogBody>
        </Dialog>
    );
};

const tasks = [
    { name: "Internet Explorer", icon: <>
        <path d="M25 19H10q1 5 6 5 3 0 4-2h5q-3 7-9 7-11-1-11-11T16 7q10 1 9 12zM11 15h9q-1-4-4-4t-5 4z" fill="#5ec3ee" stroke="#2c8ec8" />
        <path d="M4 29Q-3 23 12 9 26-2 29 4q1 4-3 9 3-8-3-8T10 14Q0 26 4 29z" fill="#f5c42a" stroke="#c8921a" strokeWidth=".6" />
    </> },
    { name: "Acrobat", icon: <>
        <path d="M2 2h27v26H2z" fill="#2b0c0e" stroke="#e9220c" strokeWidth="2" />
        <path d="M15 8q-2 3 1 7 3 4 7 5 3-1 0-2-6-1-13 3-3 3-1 3 3-1 6-8 2-7 0-8z" fill="none" stroke="#fff" strokeWidth="1.3" />
    </> },
    { name: "Thunderbird", open: true, icon: <>
        <circle cx="15" cy="16" r="14" fill="#1f5f9f" />
        <path d="M5 8Q8 0 17 2q13 2 13 15-1 10-9 13 6-9 2-18Q17 4 5 8z" fill="#123b6e" />
        <path d="M7 6q8-6 16 3l5 9M6 8q9-3 17 9" fill="none" stroke="#57a7dc" strokeWidth="1.5" />
        <path d="M3 16l15-4 5 11-14 5-6-6z" fill="#f1eee7" stroke="#999" />
        <path d="M3 16l11 5 4-9" fill="none" stroke="#aaa" />
    </> },
    { name: "Explorer", icon: <>
        <path d="M1 6l2-3h9l2 3h14l2 3v19H1z" fill="#e8cd7b" stroke="#b8963d" />
        <path d="M4 4h8v3H4zM12 7h8v3h-8zM20 9h7v3h-7z" fill="#fff" />
        <path d="M5 4h3v2H5z" fill="#2b9e3d" /><path d="M13 7h3v2h-3z" fill="#cf4526" /><path d="M21 9h3v2h-3z" fill="#3279c6" />
        <path d="M1 12h29v16H1z" fill="#f4df98" stroke="#cbb160" />
        <path d="M6 29V18h19v11h-4v-6H10v6z" fill="#9bd3ee" stroke="#4f9ec9" />
    </> },
    { name: "Chrome", open: true, icon: <>
        <circle cx="15" cy="16" r="14" fill="#dd4b39" />
        <path d="M3 8l7 13 5 9A14 14 0 0 1 3 8z" fill="#23a35c" />
        <path d="M28 10H15l6 10-6 10a14 14 0 0 0 13-20z" fill="#fdd03b" />
        <circle cx="15" cy="16" r="7" fill="#fff" /><circle cx="15" cy="16" r="5" fill="#4387f3" />
    </> },
    { name: "Grafis", front: true, icon: <>
        <path d="M0 1h31v30H0z" fill="#a2c517" />
        <path d="M0 1h31v16Q15 12 0 17z" fill="#c6d95f" />
        <path d="M0 1h31v30" fill="none" stroke="#5c6b21" />
        <path d="M12 5l6-1q3 3 6 0l5 2-1 6-2 3 2 15H13z" fill="#fff" stroke="#333" />
        <path d="M18 12H8q-8 2-8 9t8 9h10V19h-8v4h3v3H8q-3-5 0-9h10z" fill="#b0103a" />
        <path d="M18 12H8q-5 1-7 6l17-1z" fill="#dfa0ac" />
    </> },
];

const TaskBarRow = () => (
    <TaskBar>
        <TaskButton $start type="button" aria-label="Start">
            <svg width="28" height="28" fill="#fff"><path d="M2 5l11-1v10H2zM14 4l14-2v12H14zM2 15h11v10L2 23zM14 15h14v12l-14-2z" /></svg>
        </TaskButton>
        {tasks.map(task => (
            <TaskButton key={task.name} type="button" $open={task.open} $front={task.front} aria-label={task.name}>
                <svg width="31" height="32">{task.icon}</svg>
            </TaskButton>
        ))}
        <Tray>
            <TrayIcon $after={13} width="30" height="18" fill="none" stroke="#fff">
                <path d="M1 1h28v16H1z" strokeWidth="2" />
                <path d="M4 5h22M4 8h22M4 11h22" strokeWidth="2" strokeDasharray="2 1" />
                <path d="M4 14h3M9 14h12M23 14h3" strokeWidth="2" />
            </TrayIcon>
            <TrayIcon $after={13} width="8" height="5" fill="#fff"><path d="M0 5l4-4 4 4z" /></TrayIcon>
            <TrayIcon $after={8} width="15" height="12" fill="#fff"><path d="M0 9h2v3H0zM3 7h2v5H3zM6 5h2v7H6zM9 3h2v9H9zM12 0h3v12h-3z" /></TrayIcon>
            <TrayIcon $after={9} width="16" height="14">
                <path d="M1 2h14v11H1z" fill="#fff" stroke="#111" />
                <path d="M3 4h10v3H3zM3 9h4v2H3zM9 9h4v2H9z" fill="#111" />
            </TrayIcon>
            <TrayIcon $after={9} width="16" height="16">
                <path d="M1 3l4-2 3 2-3 2zM8 3l3-2 4 2-3 2zM1 7l4-2 3 2-3 2zM8 7l4-2 3 2-3 2zM4 10l4-2 3 2-3 2z" fill="#fff" />
                <circle cx="11" cy="11" r="4" fill="#1d73d8" stroke="#fff" />
                <path d="M9 13l4-4" stroke="#fff" strokeWidth="1.5" />
            </TrayIcon>
            <TrayIcon $after={9} width="15" height="16" fill="none" stroke="#fff">
                <path d="M1 2v3M4 2v3M0 5h5v3H0zM3 8v8M8 3h6v12H8zM10 1h3" strokeWidth="1.5" />
            </TrayIcon>
            <TrayIcon $after={16} width="16" height="14" fill="none" stroke="#fff">
                <path d="M1 5h2l4-4v12L3 9H1z" fill="#fff" />
                <path d="M9 5q2 2 0 4M11 3q4 4 0 8M13 1q5 6 0 12" />
            </TrayIcon>
            <span>DEU</span>
            <Clock>{"18:25\n22.05.2018"}</Clock>
        </Tray>
    </TaskBar>
);

const App = () => (
    <>
        <GlobalStyle />
        <Desktop>
            <TitleBar>
                <AppIcon><GrafisMark /></AppIcon>
                <WindowTitle>{"Grafis – [C:\u2026\\Charlotte Rocher\\2018\\Damen\\test.mdl] – 50_Werte_OPTIMASS"}</WindowTitle>
                <WindowControls>
                    <WindowButton type="button" aria-label="Minimieren">
                        <svg width="10" height="12" fill="#222"><path d="M1 8h8v2H1z" /></svg>
                    </WindowButton>
                    <WindowButton type="button" aria-label="Wiederherstellen">
                        <svg width="12" height="12" fill="none" stroke="#222"><path d="M1 4h7v6H1z" strokeWidth="2" /><path d="M3 1h7v7" /></svg>
                    </WindowButton>
                    <WindowButton $wide type="button" aria-label="Schließen">
                        <svg width="10" height="10" fill="none" stroke="#e4e4e4" strokeWidth="2"><path d="M1 1l7 7M8 1L1 8" /></svg>
                    </WindowButton>
                </WindowControls>
            </TitleBar>
            <MenuBar $height={20} $color="#767676">
                {["Datei", "Bearbeiten", "Extras", "Ansicht", "Gradierung", "Sprungwert", "Fertigmaß", "Hilfe"].map(item => (
                    <MenuLink href="#" key={item}>{item}</MenuLink>
                ))}
            </MenuBar>
            <Workspace>
                <Canvas>
                    <Drawing fill="none" shapeRendering="crispEdges">
                        <path d="M739 381h328v329H739z" stroke="#3030ff" />
                        <path d="M1049 381h18" stroke="#20c020" />
                        <path d="M1024 333l38 36 5-6v18M1024 333l-5 5 37 37-7 6" stroke="#e01010" />
                        <g stroke="#ed1c24" shapeRendering="auto">
                            <circle cx="739" cy="381" r="3.5" />
                            <circle cx="1067" cy="381" r="3.5" />
                            <circle cx="739" cy="710" r="3.5" />
                            <circle cx="1067" cy="710" r="3.5" />
                        </g>
                    </Drawing>
                </Canvas>
                <SideBar>
                    {sideRows.map((row, i) => (
                        <SideRow key={i} $gap={row.gap}>
                            {row.tools.map((tool, j) => (tool ? <Tool key={j} tool={tool} size={36} /> : <span key={j} />))}
                        </SideRow>
                    ))}
                </SideBar>
            </Workspace>
            <StatusBar>
                <StatusCell $width={650}>{"Teil= 002  NN"}</StatusCell>
                <StatusCell $width={163}>___N38_0</StatusCell>
                <StatusCell>Gradierpunkt bearbeiten oder andere Funktion wählen.</StatusCell>
            </StatusBar>
            <TaskBarRow />

            <Palette>
                <PaletteHead>
                    <h2>GRAFIS</h2>
                    <CloseButton $color="#b0b0b0" type="button" aria-label="Palette schließen">x</CloseButton>
                </PaletteHead>
                <PaletteTools>
                    {paletteTools.map(tool => <Tool key={tool.name} tool={tool} size={46} />)}
                </PaletteTools>
            </Palette>

            <GradingDialog />
            <Note>Базовый размер</Note>

            <Balloon>
                <BalloonHead>
                    <svg width="16" height="15" fill="#c6c6c6" stroke="#8b8b8b"><path d="M1 4l4-3 3 2 3-2 4 3-3 2 3 3-4 2v1l-3 2-3-2v-1L1 9l3-3zM4 6l4-3 4 3-4 3z" /></svg>
                    <h2>Screenshot hinzugefügt</h2>
                    <button type="button" aria-label="Optionen">
                        <svg width="11" height="11" fill="#909090"><path d="M3 0l-1 3 2 1 1-2 1 2-1 2 5 3 1 2-2 0-5-4-2 0-2-2V1l1 0z" /></svg>
                    </button>
                    <button type="button" aria-label="Hinweis schließen">
                        <svg width="10" height="10" fill="none" stroke="#909090" strokeWidth="2"><path d="M1 1l8 8M9 1L1 9" /></svg>
                    </button>
                </BalloonHead>
                <p>Ein Screenshot wurde Ihrer Dropbox hinzugefügt.</p>
                <BalloonTail width="20" height="22"><path d="M1 0v1l17 18V0z" fill="#e4e2ef" /><path d="M1 1l17 18V1" fill="none" stroke="#000" /></BalloonTail>
            </Balloon>

            <Watermark>©www.season.ru</Watermark>

            <Markup fill="none" stroke="#ed1c24" strokeWidth="3" strokeLinejoin="round">
                <path d="M1174 375L1157 368 1137 359 1127 357 1105 354 1067 353 1048 360 1033 367 1024 374 1017 376 1003 382 997 388 994 398 994 425 1002 442 1010 459 1020 472 1032 483 1049 492 1067 496 1082 499 1113 499 1142 491 1157 483 1168 473 1175 459 1183 447 1186 440 1189 428 1189 408 1185 390 1177 373 1172 363 1165 353 1158 342 1152 334 1146 330 1141 330 1134 334" />
                <path d="M201 326L207 326 213 331 222 338 222 345 218 349 210 352 188 352 173 351 160 347 147 345 117 345 103 346 87 348 80 350 63 351 50 351 40 348 33 344 32 339 35 334 40 331 53 329 67 327 80 327 103 328 117 326 133 326 150 327 167 329 177 331 190 331 200 333 216 336" />
                <path d="M698 1129V1105L703 1097 713 1088 720 1087 725 1088 730 1095 735 1105 739 1115 742 1125 742 1150 737 1162 730 1172 725 1176 687 1176 677 1175 667 1169 658 1160 654 1150 654 1138 659 1126 670 1118 680 1110 693 1104 703 1101 718 1101" />
            </Markup>
        </Desktop>
    </>
);

export default App;
